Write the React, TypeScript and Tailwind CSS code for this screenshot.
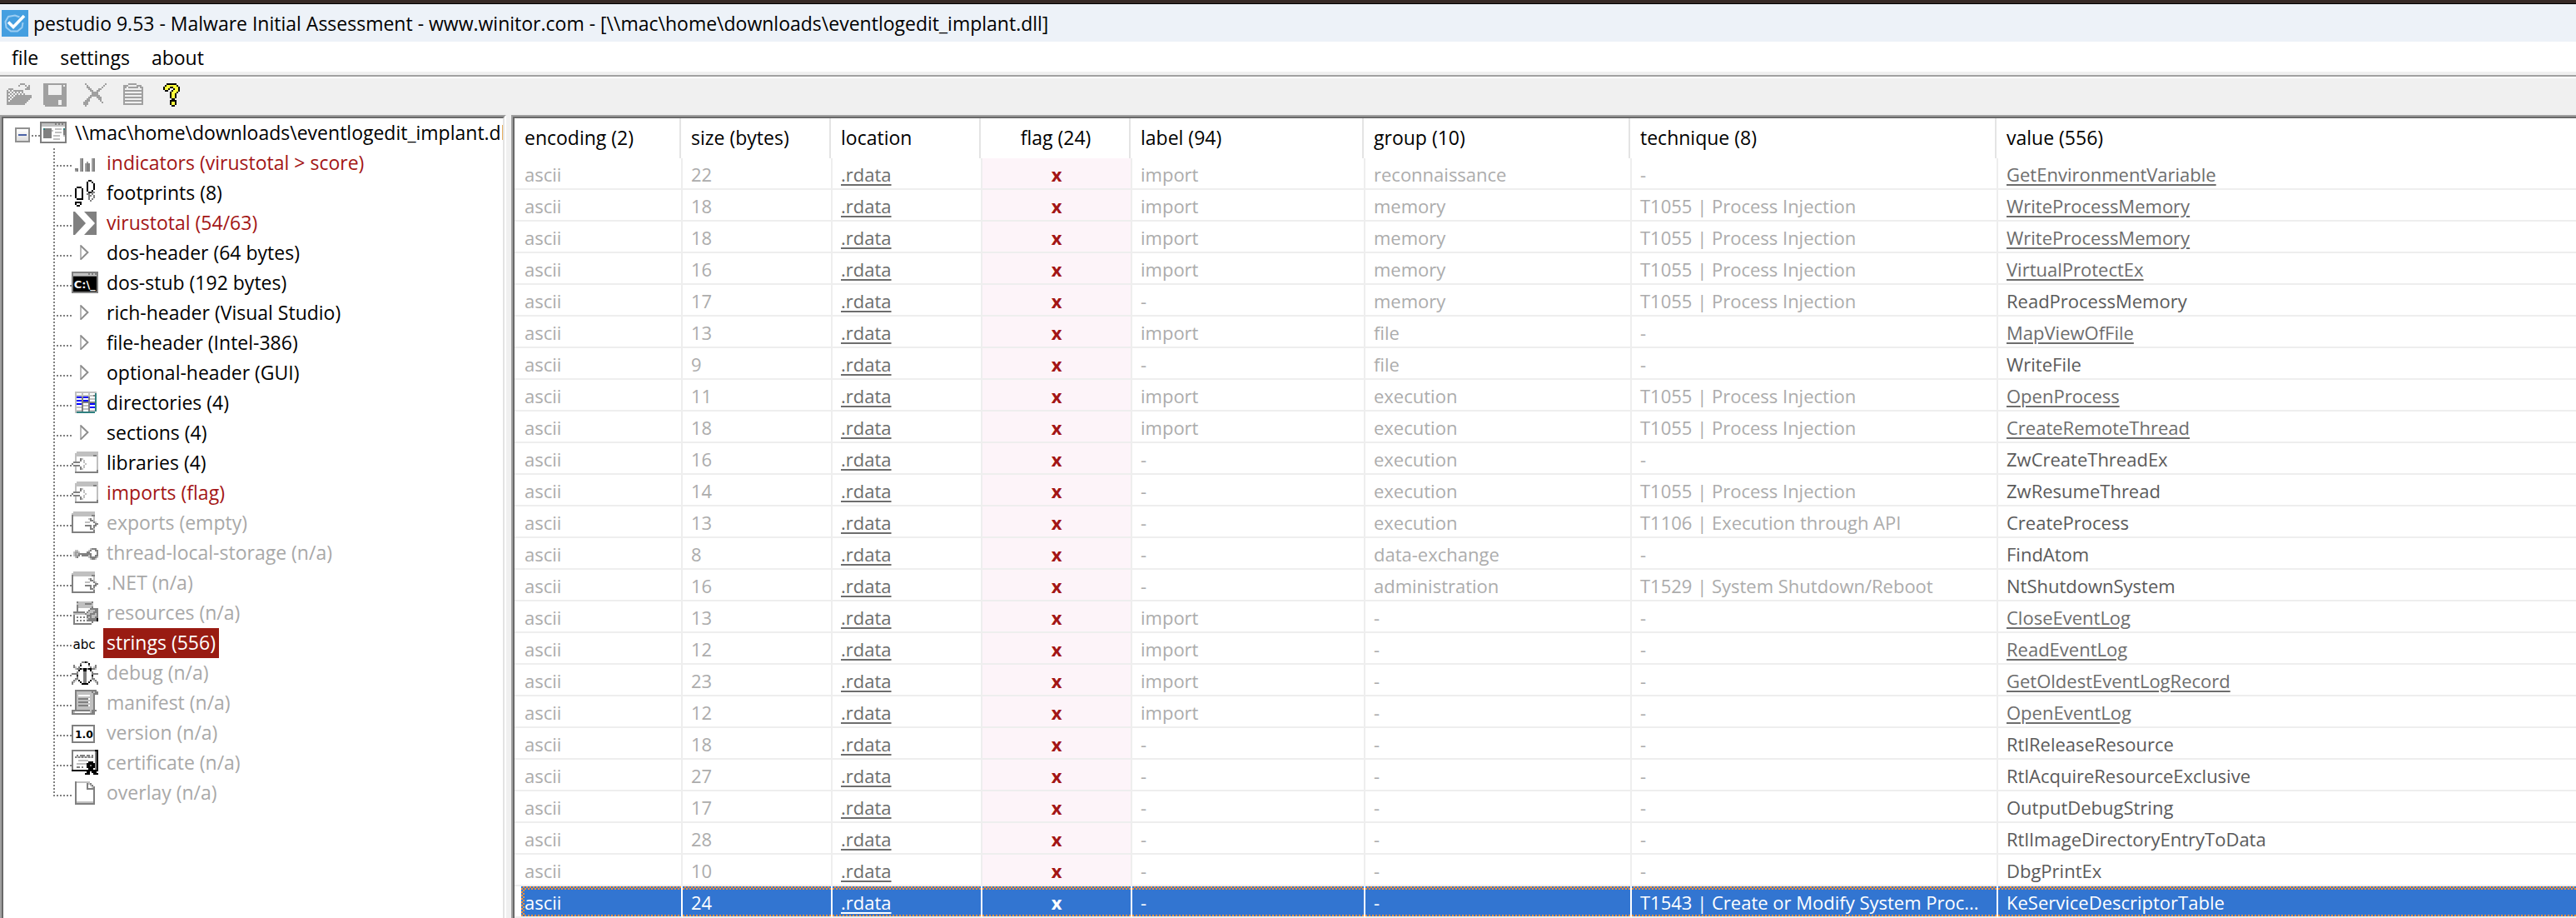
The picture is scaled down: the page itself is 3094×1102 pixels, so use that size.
import React from 'react';

type Tone = 'normal' | 'alert' | 'muted' | 'selected';

const INK: Record<string, string> = {
  k: '#000000',
  d: '#606060',
  g: '#808080',
  l: '#c0c0c0',
  w: '#ffffff',
  b: '#0000ff',
  t: '#2f8080',
  y: '#ffff3c',
  s: '#a0a0a0',
};

/* A 16x16 bitmap icon; each character names one colour, "." is clear. */
function Bitmap({ rows, top = 0 }: { rows: string[]; top?: number }) {
  return (
    <svg viewBox="0 0 16 16" className="size-8 shrink-0" shapeRendering="crispEdges" aria-hidden="true">
      {rows.flatMap((row, y) =>
        [...row].map((c, x) =>
          INK[c] ? <rect key={`${x}-${y}`} x={x} y={y + top} width="1" height="1" fill={INK[c]} /> : null,
        ),
      )}
    </svg>
  );
}

const icons = {
  root: (
    <Bitmap
      top={1}
      rows={[
        'gggggggggggggggg',
        'gllllllllglglglg',
        'gllllllllllllllg',
        'gwwwwwwwwwwwwwwg',
        'gwtggggwwllllwtg',
        'gwggggglwwwwwwgg',
        'gwgggggwwllllwgg',
        'gwgggggwwwwwwwgg',
        'gwgggggwllllwwlg',
        'gwgggggwwwwwwwwg',
        'gwwwwwwwllllwwwg',
        'gwwwwwwwwwwwwwwg',
        'gggggggggggggggg',
      ]}
    />
  ),
  bars: (
    <Bitmap
      top={5}
      rows={[
        '.....sg.....sg',
        '.....sg.....sg',
        '.....sg..s..sg',
        '.....sg.sgg.sg',
        '.....sg.sgg.sg',
        '.....sg.sgg.sg',
        '..gg.sg.sgg.sg',
        '..sg.sg.sgg.sg',
      ]}
    />
  ),
  feet: (
    <Bitmap
      rows={[
        '..........kk....',
        '.........kwwk...',
        '.........kwwwk..',
        '.........kwwwk..',
        '...kkk...kwwwk..',
        '..kwwwk..kwwwk..',
        '..kwwwk..kwwk...',
        '..kwwwk...kkgg..',
        '..kwwwk..gg.g...',
        '..kwwwk...ggwg..',
        '..kwwwk...gwwg..',
        '...kkkk...gwg...',
        '...........g....',
        '..kkkk..........',
        '..kwwk..........',
        '...kk...........',
      ]}
    />
  ),
  vt: (
    <svg viewBox="0 0 16 16" className="size-8 shrink-0" aria-hidden="true">
      <path d="M1 1h14v14H1z" fill="#808080" />
      <path d="M2 1h5.5L14 8l-6.500 7H2l6.500-7z" fill="#fff" />
    </svg>
  ),
  arrow: (
    <svg viewBox="0 0 16 16" className="size-8 shrink-0" aria-hidden="true">
      <path d="M5.5 3v9" stroke="#b8b8b8" fill="none" />
      <path d="M5.5 3.500L9.700 7.500L5.500 11.700" stroke="#8c8c8c" fill="none" />
    </svg>
  ),
  dos: (
    <svg viewBox="0 0 16 16" className="size-8 shrink-0" aria-hidden="true">
      <path d="M0 1h16v13H0z" fill="#808080" />
      <path d="M1 2h14v1.500H1z" fill="#c0c0c0" />
      <path d="M10 2h1v1h-1zM12 2h1v1h-1zM14 2h1v1h-1z" fill="#808080" />
      <path d="M1 4h14v9H1z" fill="#000" />
      <text x="1.400" y="11.200" fontFamily="'DejaVu Sans', sans-serif" fontWeight="bold" fontSize="6.500" fill="#fff">C:\_</text>
    </svg>
  ),
  grid: (
    <Bitmap
      top={1}
      rows={[
        '..lllllllllllll',
        '..lwwwlwwwlwwwt',
        '..lllllllllllgt',
        '..lbbbgbbbgwwwt',
        '..lwwwgwwwglllt',
        '..lbbbgbbbgwwwt',
        '..lwwwggggggggt',
        '..lbbbgwwwgbbbt',
        '..lwwwglllgwwwt',
        '..llllgwwwgbbbt',
        '..lwwwglllgwwwt',
        '..llllgwwwglllt',
        '..lttttttttttt',
      ]}
    />
  ),
  into: (
    <Bitmap
      top={1}
      rows={[
        '...lllllllllllll',
        '..llllllllllllll',
        '..lllllllllllggl',
        '..lwwwwwwwwwwwwl',
        '..lwwglwwwwwwwwl',
        '..lwwgwlwwwwwwwl',
        '.ggggwwlwwwwwwwl',
        'gwwwwwwwlwwwwwwl',
        '.ggggwwlwwwwwwwl',
        '..lwwgwlwwwwwwwl',
        '..lwwglwwwwwwwwl',
        '..lwwwwwwwwwwwwg',
        '..gggggggggggggg',
      ]}
    />
  ),
  out: (
    <Bitmap
      top={1}
      rows={[
        '.lllllllllllll..',
        'llllllllllllll..',
        'glllllllllllgg..',
        'gwwwwwwwwwwwwl..',
        'gwwwwwwwwwlgwl..',
        'gwwwwwwwwwwggl..',
        'gwwwwwwwlllwwgl.',
        'gwwwwwwwwwwwwwgg',
        'gwwwwwwwggggwgg.',
        'gwwwwwwwwwwgwg..',
        'gwwwwwwwwwwggl..',
        'gwwwwwwwwwwwwg..',
        'gggggggggggggg..',
      ]}
    />
  ),
  thread: (
    <Bitmap
      top={5}
      rows={[
        '...........lggg.',
        '..ll......lgwwgg',
        '.lssl....ggwwwwg',
        '.lslggggggggwwwg',
        '.lssg.gggglgwwgg',
        '..lg......lggggl',
        '...........lggl.',
      ]}
    />
  ),
  res: (
    <Bitmap
      top={1}
      rows={[
        '...gllllllllg...',
        '...lllllggggl...',
        '...glllllllll...',
        '...gllllllllg...',
        '...gwwwwwwwggggg',
        '...gwwwwwwglllgg',
        '.gggggggwglllggg',
        '.lllllllgllggglg',
        '.gwwwwwwwggglllg',
        '.gwgwgwgwglgllgg',
        '.gwwwwwwwlgggggk',
        '.gwgwgwgwggggggk',
        '.gwwwwwwwwwwg...',
        '.ggggggggggg....',
      ]}
    />
  ),
  abc: (
    <svg viewBox="0 0 16 16" className="size-8 shrink-0" aria-hidden="true">
      <text x="0.700" y="11.600" fontFamily="'DejaVu Sans', sans-serif" fontSize="7.600">abc</text>
    </svg>
  ),
  bug: (
    <Bitmap
      top={1}
      rows={[
        '......ggkg......',
        '.....gwwwwk.....',
        '.g...kwwwwg...g.',
        '.gl.gwwwwwwg.lg.',
        '..lggkgkkgkkggl.',
        '....kwwkkwwk....',
        '...gwwwggwwwg...',
        'ggggwwwggwwwgggg',
        '...kwwwggwwwk...',
        '...gwwwggwwwg...',
        '..ggwwwggwwwgg..',
        '.gl.kwwggwwk.lg.',
        'gl...kwggwk...lg',
        'g.....kkkk.....g',
      ]}
    />
  ),
  scroll: (
    <Bitmap
      rows={[
        '..ggggggggggggg.',
        '..glllllllllglgg',
        '..gllllllllllggg',
        '..glwwwwwwwllg..',
        '..gllllllllllg..',
        '..glggggggwllg..',
        '..gllllllllllg..',
        '..glggggggwllg..',
        '..gllllllllllg..',
        '..glggggggwllg..',
        '..gllllllllllg..',
        '..gllllllllllg..',
        'ggggggggggglggg.',
        'glwwwwwwwwwlgg..',
        'gggggggggggggg..',
      ]}
    />
  ),
  version: (
    <svg viewBox="0 0 16 16" className="size-8 shrink-0" aria-hidden="true">
      <path d="M.5 3.500h13v10H.5z" fill="#fff" stroke="#808080" />
      <text x="2" y="11" fontFamily="'DejaVu Sans', sans-serif" fontWeight="bold" fontSize="6.200">1.0</text>
    </svg>
  ),
  cert: (
    <Bitmap
      rows={[
        'ggggggggggggggkk',
        'gwwwwwwwwwwwwwgk',
        'gwwwwwwwwwwwwwgk',
        'gwwgwgggwggwgwgk',
        'gwglglglglglgwgk',
        'gwwwwwwwwwwwwwgk',
        'gwwwllllllwwwwgk',
        'gwwwwwwwwwkkkwgk',
        'gwwllllllkkkkkgk',
        'gwwwwwwwwkkgkkgk',
        'gwwggwgwwkkkkkgk',
        'gwwwwwwwwwkkkwgk',
        'kkkkkkkkkkkkkkkk',
        '.........kk.kkk.',
        '........kkk..kkk',
      ]}
    />
  ),
  page: (
    <Bitmap
      top={1}
      rows={[
        '..gllllllll.....',
        '..gwwwwwwglg....',
        '..gwwwwwwgwlg...',
        '..gwwwwwwgwwlg..',
        '..gwwwwwwggggg..',
        '..gwwwwwwwwwwg..',
        '..gwwwwwwwwwwg..',
        '..gwwwwwwwwwwg..',
        '..gwwwwwwwwwwg..',
        '..gwwwwwwwwwwg..',
        '..gwwwwwwwwwwg..',
        '..gwwwwwwwwwwg..',
        '..gllllllllllg..',
        '..gggggggggggg..',
      ]}
    />
  ),
};

const tools: { name: string; icon: React.ReactNode }[] = [
  {
    name: 'open',
    icon: (
      <Bitmap
        top={1}
        rows={[
          '.........sss....',
          '........s...s.s.',
          '.............ss.',
          '..sss.......sss.',
          '.s.s.ssssss.....',
          '.ss.s.s.s.s.....',
          '.s.s.s.s.s.s....',
          '.ss.s.ssssssssss',
          '.s.s.sssssssssss',
          '.ss.sssssssssss.',
          '.s.sssssssssss..',
          '.ssssssssssss...',
          '.sssssssssss....',
        ]}
      />
    ),
  },
  {
    name: 'save',
    icon: (
      <Bitmap
        top={1}
        rows={[
          'ssssssssssssss',
          'sss........s.s',
          'sss........sss',
          'sss........sss',
          'sss........sss',
          'sss........sss',
          'sss........sss',
          'ssssssssssssss',
          'ssssssssssssss',
          'ssssssssssssss',
          'sssssssss..sss',
          'sssssssss..sss',
          'sssssssss..sss',
          '.sssssssssssss',
        ]}
      />
    ),
  },
  {
    name: 'delete',
    icon: (
      <Bitmap
        top={1}
        rows={[
          '..s...........s.',
          '...s.........s..',
          '...ss.......s...',
          '....ss....ss....',
          '.....ss..ss.....',
          '......ssss......',
          '......ssss......',
          '.....ssssss.....',
          '....ss...sss....',
          '...ss.....ss....',
          '..sss......s....',
          '.sss........s...',
          '.sss............',
          '..s.............',
        ]}
      />
    ),
  },
  {
    name: 'copy',
    icon: (
      <Bitmap
        top={1}
        rows={[
          '.....sssss......',
          '..sss.....sss...',
          '..ss.ssssss.ss..',
          '..s..........s..',
          '..ssssssssssss..',
          '..s..........s..',
          '..ssssssssssss..',
          '..s..........s..',
          '..ssssssssssss..',
          '..s..........s..',
          '..ssssssssssss..',
          '..s..........s..',
          '..ssssssssssss..',
        ]}
      />
    ),
  },
  {
    name: 'help',
    icon: (
      <Bitmap
        top={1}
        rows={[
          '.....kkkkkk.....',
          '....kyyyyyyk....',
          '...kyyykkyyyk...',
          '...kyyk..kyyk...',
          '....kk..kyyyk...',
          '.......kyyyk....',
          '.......kyyk.....',
          '.......kyyk.....',
          '.......kyyk.....',
          '........kk......',
          '.......kkkk.....',
          '.......kyyk.....',
          '.......kyyk.....',
          '........kk......',
        ]}
      />
    ),
  },
];

const tree: [React.ReactNode, string, Tone][] = [
  [icons.bars, 'indicators (virustotal > score)', 'alert'],
  [icons.feet, 'footprints (8)', 'normal'],
  [icons.vt, 'virustotal (54/63)', 'alert'],
  [icons.arrow, 'dos-header (64 bytes)', 'normal'],
  [icons.dos, 'dos-stub (192 bytes)', 'normal'],
  [icons.arrow, 'rich-header (Visual Studio)', 'normal'],
  [icons.arrow, 'file-header (Intel-386)', 'normal'],
  [icons.arrow, 'optional-header (GUI)', 'normal'],
  [icons.grid, 'directories (4)', 'normal'],
  [icons.arrow, 'sections (4)', 'normal'],
  [icons.into, 'libraries (4)', 'normal'],
  [icons.into, 'imports (flag)', 'alert'],
  [icons.out, 'exports (empty)', 'muted'],
  [icons.thread, 'thread-local-storage (n/a)', 'muted'],
  [icons.out, '.NET (n/a)', 'muted'],
  [icons.res, 'resources (n/a)', 'muted'],
  [icons.abc, 'strings (556)', 'selected'],
  [icons.bug, 'debug (n/a)', 'muted'],
  [icons.scroll, 'manifest (n/a)', 'muted'],
  [icons.version, 'version (n/a)', 'muted'],
  [icons.cert, 'certificate (n/a)', 'muted'],
  [icons.page, 'overlay (n/a)', 'muted'],
];

const toneClass: Record<Tone, string> = {
  normal: 'text-black',
  alert: 'text-[#a31515]',
  muted: 'text-[#a8a8a8]',
  selected: 'bg-[#991b12] text-white',
};

const headers = [
  'encoding (2)',
  'size (bytes)',
  'location',
  'flag (24)',
  'label (94)',
  'group (10)',
  'technique (8)',
  'value (556)',
];

const INJ = 'T1055 | Process Injection';

/* size, label, group, technique, value */
const strings: [number, string, string, string, string][] = [
  [22, 'import', 'reconnaissance', '-', 'GetEnvironmentVariable'],
  [18, 'import', 'memory', INJ, 'WriteProcessMemory'],
  [18, 'import', 'memory', INJ, 'WriteProcessMemory'],
  [16, 'import', 'memory', INJ, 'VirtualProtectEx'],
  [17, '-', 'memory', INJ, 'ReadProcessMemory'],
  [13, 'import', 'file', '-', 'MapViewOfFile'],
  [9, '-', 'file', '-', 'WriteFile'],
  [11, 'import', 'execution', INJ, 'OpenProcess'],
  [18, 'import', 'execution', INJ, 'CreateRemoteThread'],
  [16, '-', 'execution', '-', 'ZwCreateThreadEx'],
  [14, '-', 'execution', INJ, 'ZwResumeThread'],
  [13, '-', 'execution', 'T1106 | Execution through API', 'CreateProcess'],
  [8, '-', 'data-exchange', '-', 'FindAtom'],
  [16, '-', 'administration', 'T1529 | System Shutdown/Reboot', 'NtShutdownSystem'],
  [13, 'import', '-', '-', 'CloseEventLog'],
  [12, 'import', '-', '-', 'ReadEventLog'],
  [23, 'import', '-', '-', 'GetOldestEventLogRecord'],
  [12, 'import', '-', '-', 'OpenEventLog'],
  [18, '-', '-', '-', 'RtlReleaseResource'],
  [27, '-', '-', '-', 'RtlAcquireResourceExclusive'],
  [17, '-', '-', '-', 'OutputDebugString'],
  [28, '-', '-', '-', 'RtlImageDirectoryEntryToData'],
  [10, '-', '-', '-', 'DbgPrintEx'],
  [24, '-', '-', 'T1543 | Create or Modify System Proc...', 'KeServiceDescriptorTable'],
];

function Cell({
  selected,
  first,
  last,
  className,
  children,
}: {
  selected: boolean;
  first?: boolean;
  last?: boolean;
  className: string;
  children: React.ReactNode;
}) {
  return (
    <td
      className={`border-b-2 border-b-[#eeeeee] p-0 ${last ? '' : 'border-r-2'} ${
        selected ? 'border-r-white text-white' : `border-r-[#eeeeee] ${className}`
      } ${selected && className.includes('text-center') ? 'text-center font-bold' : ''}`}
    >
      <div
        className={`pt-1 pb-0.5 ${first ? 'ml-2 pl-1' : ''} ${
          selected ? 'bg-[repeating-conic-gradient(#f0913a_0_25%,#3275d1_0_50%)] bg-size-[4px_4px]' : ''
        }`}
      >
        <div
          className={`h-[30px] truncate leading-[30px] ${first ? '' : 'px-2.5'} ${selected ? 'bg-[#3275d1]' : ''}`}
        >
          {children}
        </div>
      </div>
    </td>
  );
}

const linkClass = 'underline decoration-2 underline-offset-[3px]';

export default function App() {
  return (
    <div className="flex min-h-screen flex-col overflow-hidden bg-[#f0f0f0] font-['Open_Sans',sans-serif] text-[23px] text-black">
      <div className="h-[5px] border-b border-black bg-[#362a26]" />
      <header className="flex h-[45px] items-center gap-1.5 bg-[#edf2f8] pl-0.5">
        <svg viewBox="0 0 32 32" className="size-8 shrink-0" aria-hidden="true">
          <path d="M0 0h32v32H0z" fill="#459fe0" />
          <path d="M21.500 8.500L16 6.500L8 8L4.500 14l1 7L11 25.500h8L24.500 21l1-6" fill="none" stroke="#9ccdf2" strokeWidth="2" />
          <path d="M8 14.500l6 6L27 7" fill="none" stroke="#fff" strokeWidth="3.600" />
        </svg>
        <h1 className="pt-0.5 whitespace-nowrap">
          {'pestudio 9.53 - Malware Initial Assessment - www.winitor.com - [\\\\mac\\home\\downloads\\eventlogedit_implant.dll]'}
        </h1>
      </header>
      <nav className="flex h-9 gap-[26px] bg-white pt-0.5 pl-3.5 leading-[34px]">
        <button type="button">file</button>
        <button type="button">settings</button>
        <button type="button">about</button>
      </nav>
      <div className="mt-1 h-1 border-t-2 border-b-2 border-t-[#a0a0a0] border-b-white" />
      <div className="flex h-11 gap-3.5 pt-1 pl-1.5" role="toolbar" aria-label="tools">
        {tools.map((t) => (
          <button key={t.name} type="button" aria-label={t.name} className="size-8">
            {t.icon}
          </button>
        ))}
      </div>

      <div className="flex flex-1 gap-1.5">
        <aside className="w-[608px] shrink-0 border-t-2 border-r-2 border-l-2 border-t-[#a0a0a0] border-r-white border-l-[#a0a0a0]">
          <div className="h-full overflow-hidden border-t-2 border-r-2 border-l-2 border-t-[#696969] border-r-[#e3e3e3] border-l-[#696969] bg-white">
            <div className="flex h-9 items-center pl-3.5 whitespace-nowrap">
              <button
                type="button"
                aria-label="collapse"
                className="mt-1 flex size-[18px] shrink-0 items-center justify-center border-2 border-[#919191] bg-linear-to-b from-white to-[#dcdcdc]"
              >
                <span className="h-0.5 w-2.5 bg-[#4b63a7]" />
              </button>
              <span className="mt-1.5 ml-0.5 h-0.5 w-2.5 shrink-0 bg-[repeating-linear-gradient(90deg,#808080_0_2px,transparent_2px_4px)]" />
              {icons.root}
              <button type="button" className="ml-1.5 px-1 pb-0.5 leading-8">
                {'\\\\mac\\home\\downloads\\eventlogedit_implant.dll'}
              </button>
            </div>
            <ul>
              {tree.map(([icon, label, tone], i) => (
                <li key={label} className="flex h-9 pl-[60px] whitespace-nowrap">
                  <span
                    className={`w-0.5 shrink-0 bg-[repeating-linear-gradient(180deg,#808080_0_2px,transparent_2px_4px)] ${
                      i === tree.length - 1 ? 'h-[22px]' : 'h-9'
                    }`}
                  />
                  <span className="mt-5 ml-0.5 h-0.5 w-[18px] shrink-0 bg-[repeating-linear-gradient(90deg,#808080_0_2px,transparent_2px_4px)]" />
                  <span className="pt-0.5">{icon}</span>
                  <button type="button" className={`ml-1.5 h-9 px-1 pb-0.5 leading-[34px] ${toneClass[tone]}`}>
                    {label}
                  </button>
                </li>
              ))}
            </ul>
          </div>
        </aside>

        <main className="min-w-0 flex-1 border-t-2 border-l-2 border-[#a0a0a0]">
          <div className="h-full border-t-2 border-l-2 border-[#696969] bg-white">
            <table className="w-full table-fixed border-separate border-spacing-0 text-left text-[22px]">
              <colgroup>
                <col className="w-[202px]" />
                <col className="w-[180px]" />
                <col className="w-[180px]" />
                <col className="w-[180px]" />
                <col className="w-[280px]" />
                <col className="w-[320px]" />
                <col className="w-[440px]" />
                <col />
              </colgroup>
              <thead className="text-[23px]">
                <tr>
                  {headers.map((h, i) => (
                    <th key={h} scope="col" className={`p-0 font-normal ${i === 3 ? 'text-center' : ''}`}>
                      <div
                        className={`mr-0.5 h-12 leading-[46px] ${i === 0 ? 'pl-3' : 'px-2.5'} ${
                          i < 7 ? 'border-r-2 border-[#e4e4e4]' : ''
                        }`}
                      >
                        {h}
                      </div>
                    </th>
                  ))}
                </tr>
              </thead>
              <tbody>
                {strings.map(([size, label, group, technique, value], i) => {
                  const sel = i === strings.length - 1;
                  return (
                    <tr key={i} aria-selected={sel}>
                      <Cell selected={sel} first className="text-[#acacac]">ascii</Cell>
                      <Cell selected={sel} className="text-[#acacac]">{size}</Cell>
                      <Cell selected={sel} className="text-[#6d6d6d]">
                        <a href="#rdata" className={linkClass}>.rdata</a>
                      </Cell>
                      <Cell selected={sel} className="bg-[#fdf4f9] text-center font-bold text-[#a31515]">x</Cell>
                      <Cell selected={sel} className="text-[#acacac]">{label}</Cell>
                      <Cell selected={sel} className="text-[#acacac]">{group}</Cell>
                      <Cell selected={sel} className="text-[#acacac]">{technique}</Cell>
                      <Cell selected={sel} last className={label === 'import' ? 'text-[#6d6d6d]' : 'text-[#5a5a5a]'}>
                        {label === 'import' ? (
                          <a href={`#${value}`} className={linkClass}>{value}</a>
                        ) : (
                          value
                        )}
                      </Cell>
                    </tr>
                  );
                })}
              </tbody>
            </table>
          </div>
        </main>
      </div>
    </div>
  );
}
